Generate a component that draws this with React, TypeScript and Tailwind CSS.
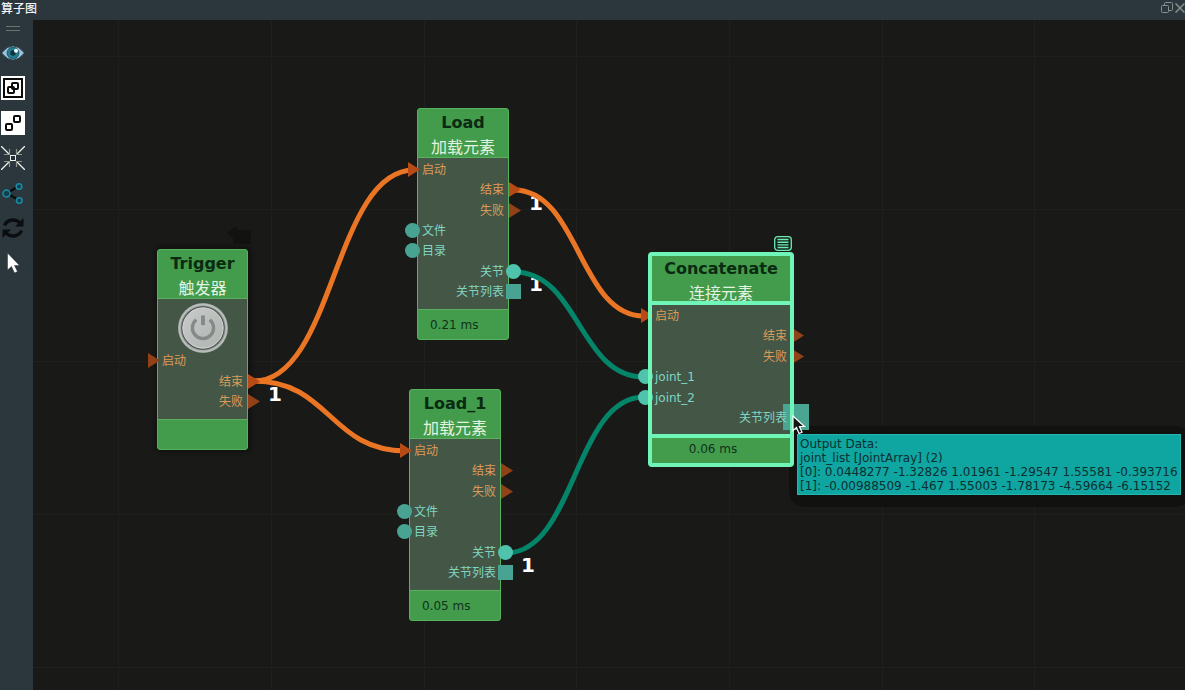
import type { ReactNode } from "react";
import clsx from "clsx";

type PortShape = "trigger" | "circle" | "list";

type Port = {
  label: string;
  side: "in" | "out";
  shape: PortShape;
  linked?: boolean;
  hovered?: boolean;
};

type GraphNode = {
  id: string;
  title: string;
  subtitle: string;
  place: string;
  bodyHeight: string;
  time?: string;
  selected?: boolean;
  power?: boolean;
  ports: Port[];
};

const nodes: GraphNode[] = [
  {
    id: "trigger",
    title: "Trigger",
    subtitle: "触发器",
    place: "left-[124px] top-[229px] w-[91px]",
    bodyHeight: "h-[122px]",
    power: true,
    ports: [
      { label: "启动", side: "in", shape: "trigger" },
      { label: "结束", side: "out", shape: "trigger", linked: true },
      { label: "失败", side: "out", shape: "trigger" },
    ],
  },
  {
    id: "load",
    title: "Load",
    subtitle: "加载元素",
    place: "left-[384px] top-[88px] w-[92px]",
    bodyHeight: "h-[153px]",
    time: "0.21 ms",
    ports: [
      { label: "启动", side: "in", shape: "trigger", linked: true },
      { label: "结束", side: "out", shape: "trigger", linked: true },
      { label: "失败", side: "out", shape: "trigger" },
      { label: "文件", side: "in", shape: "circle" },
      { label: "目录", side: "in", shape: "circle" },
      { label: "关节", side: "out", shape: "circle", linked: true },
      { label: "关节列表", side: "out", shape: "list" },
    ],
  },
  {
    id: "load_1",
    title: "Load_1",
    subtitle: "加载元素",
    place: "left-[376px] top-[369px] w-[92px]",
    bodyHeight: "h-[153px]",
    time: "0.05 ms",
    ports: [
      { label: "启动", side: "in", shape: "trigger", linked: true },
      { label: "结束", side: "out", shape: "trigger" },
      { label: "失败", side: "out", shape: "trigger" },
      { label: "文件", side: "in", shape: "circle" },
      { label: "目录", side: "in", shape: "circle" },
      { label: "关节", side: "out", shape: "circle", linked: true },
      { label: "关节列表", side: "out", shape: "list" },
    ],
  },
  {
    id: "concatenate",
    title: "Concatenate",
    subtitle: "连接元素",
    place: "left-[617px] top-[234px] w-[142px]",
    bodyHeight: "h-[133px]",
    time: "0.06 ms",
    selected: true,
    ports: [
      { label: "启动", side: "in", shape: "trigger", linked: true },
      { label: "结束", side: "out", shape: "trigger" },
      { label: "失败", side: "out", shape: "trigger" },
      { label: "joint_1", side: "in", shape: "circle", linked: true },
      { label: "joint_2", side: "in", shape: "circle", linked: true },
      { label: "关节列表", side: "out", shape: "list", hovered: true },
    ],
  },
];

const wires = [
  { d: "M221 361 C301 361 301 150 381 150", color: "#ea7524" },
  { d: "M221 361 C297 361 297 431 373 431", color: "#ea7524" },
  { d: "M481 170 C546 170 546 296 611 296", color: "#ea7524" },
  { d: "M481 252 C546 252 546 357 611 357", color: "#048468" },
  { d: "M473 533 C542 533 542 377 611 377", color: "#048468" },
];

const wireCounts = [
  { id: "trigger", place: "left-[235px] top-[362px]" },
  { id: "load-end", place: "left-[496px] top-[171px]" },
  { id: "load-joint", place: "left-[496px] top-[252px]" },
  { id: "load_1-joint", place: "left-[488px] top-[533px]" },
];

const gridX = [85, 238, 391, 543, 696, 849, 1001];
const gridY = [36, 189, 341, 494, 647];

function PortMark({ port }: { port: Port }) {
  if (port.hovered) {
    return <span className="absolute top-1/2 -right-[18px] size-[26px] -translate-y-1/2 bg-[#4aa593]" />;
  }
  return (
    <svg
      viewBox="0 0 15 15"
      className={clsx("absolute top-[3px] size-[15px]", port.side === "in" ? "-left-[13px]" : "-right-[13px]")}
    >
      {port.shape === "trigger" && (
        <path d="M3 0 L15 7.5 L3 15 Z" fill={port.linked ? "#b84a16" : "#914117"} />
      )}
      {port.shape === "circle" && (
        <circle cx="7.5" cy="7.5" r="7.5" fill={port.linked ? "#4fc3ab" : "#48a392"} />
      )}
      {port.shape === "list" && <rect width="15" height="15" fill="#48a392" />}
    </svg>
  );
}

function PowerButton() {
  return (
    <button type="button" aria-label="Run" className="mx-auto mt-1 -mb-1 size-[50px] shrink-0">
      <svg viewBox="0 0 52 52" className="size-full">
        <defs>
          <linearGradient id="knob" x1="0" y1="0" x2="1" y2="1">
            <stop offset="0" stopColor="#c8cbc9" />
            <stop offset="1" stopColor="#aeb3b0" />
          </linearGradient>
        </defs>
        <circle cx="26" cy="26" r="26" fill="#8f9692" />
        <circle cx="26" cy="26" r="24.500" fill="none" stroke="#b9bdbb" strokeWidth="2" />
        <circle cx="26" cy="26" r="22.500" fill="#454d49" />
        <circle cx="26" cy="26" r="21" fill="url(#knob)" stroke="#d9dcda" strokeWidth="1" />
        <path d="M19 17.500 A11 11 0 1 0 33 17.500" fill="none" stroke="#848a87" strokeWidth="3.500" />
        <path d="M26 13 V23" stroke="#848a87" strokeWidth="4" />
      </svg>
    </button>
  );
}

function NodeCard({ node }: { node: GraphNode }) {
  return (
    <article className={clsx("absolute", node.place)}>
      <div
        className={clsx(
          "flex flex-col rounded-[3px] border border-[#55b35c] bg-[#439b4c]",
          node.power && "shadow-[1px_0_4px_2px_#10100f]"
        )}
      >
        <header className="flex h-12 flex-col items-center pt-1 whitespace-nowrap">
          <h2 className="h-5 text-base leading-5 font-bold text-[#0b2a12]">{node.title}</h2>
          <p className="mt-1 text-base leading-[22px] text-[#e2f3e0]">{node.subtitle}</p>
        </header>
        <div className={clsx("relative flex flex-col border-y border-[#5cae60] bg-[#445747]", node.bodyHeight)}>
          {node.power && <PowerButton />}
          <ul className="flex flex-1 flex-col justify-between pt-px pb-2">
            {node.ports.map((port) => (
              <li
                key={port.label}
                className={clsx(
                  "relative flex h-5 px-1 text-xs leading-[22px] whitespace-nowrap",
                  port.side === "out" && "justify-end",
                  port.shape === "trigger" ? "text-[#dd9a56]" : "text-[#7fd6c2]"
                )}
              >
                <PortMark port={port} />
                <span className="relative">{port.label}</span>
              </li>
            ))}
          </ul>
          {node.selected && <div className="absolute -inset-x-px -inset-y-[3px] border-y-4 border-[#70f5b8]" />}
        </div>
        <footer
          className={clsx(
            "flex text-xs text-[#10321a]",
            node.selected ? "h-7 items-center justify-center pr-4 pb-0.5" : "h-[29px] items-center pl-3"
          )}
        >
          {node.time}
        </footer>
      </div>
      {node.selected && (
        <div className="absolute -inset-0.5 rounded-[4px] border-4 border-[#70f5b8]" />
      )}
    </article>
  );
}

function ToolButton({ label, children }: { label: string; children: ReactNode }) {
  return (
    <button type="button" aria-label={label} className="size-6">
      <svg viewBox="0 0 24 24" fill="none" className="size-full">
        {children}
      </svg>
    </button>
  );
}

function Toolbar() {
  return (
    <aside className="flex w-[33px] shrink-0 flex-col items-start gap-[11px] pl-px">
      <div className="mt-1.5 ml-[5px] -mb-[1px] flex h-[5px] w-[14px] flex-col justify-between">
        <span className="h-px bg-[#69746f]" />
        <span className="h-px bg-[#69746f]" />
      </div>
      <ToolButton label="显示">
        <path d="M0.500 12 Q12 -2.500 23.500 12 Q12 26.500 0.500 12 Z" fill="#9cc4dc" stroke="#11232b" strokeWidth="0.800" />
        <circle cx="12" cy="12" r="6" fill="#237d8e" stroke="#15424e" strokeWidth="0.700" />
        <circle cx="12" cy="12" r="2.700" fill="#0d3640" />
        <circle cx="15" cy="9.800" r="2" fill="#f3fbfd" />
      </ToolButton>
      <ToolButton label="编组">
        <rect width="24" height="24" fill="#fff" />
        <rect x="3" y="3" width="18" height="18" stroke="#0a0a0a" strokeWidth="2" />
        <rect x="7" y="11" width="6" height="6" rx="1" stroke="#0a0a0a" strokeWidth="2" />
        <rect x="11" y="7" width="6" height="6" rx="1" stroke="#0a0a0a" strokeWidth="2" />
      </ToolButton>
      <ToolButton label="取消编组">
        <rect width="24" height="24" fill="#fff" />
        <rect x="5" y="13" width="6" height="6" rx="1" stroke="#0a0a0a" strokeWidth="2" />
        <rect x="13" y="5" width="6" height="6" rx="1" stroke="#0a0a0a" strokeWidth="2" />
      </ToolButton>
      <ToolButton label="居中">
        <path d="M0 0 L8 8 M24 0 L16 8 M0 24 L8 16 M24 24 L16 16" stroke="#eef0ec" strokeWidth="1.300" />
        <path d="M8.500 3 V8.500 H3 M15.500 3 V8.500 H21 M8.500 21 V15.500 H3 M15.500 21 V15.500 H21" stroke="#8d958d" strokeWidth="1.200" />
        <rect x="9.500" y="9.500" width="5" height="5" fill="#263137" stroke="#eef0ec" />
      </ToolButton>
      <ToolButton label="布局">
        <path d="M8 11 L16 6 M8 13.500 L16 18" stroke="#080d0f" strokeWidth="2.200" />
        <circle cx="5.500" cy="12.500" r="3.500" fill="#123f4b" stroke="#168ba4" strokeWidth="1.600" />
        <circle cx="18" cy="5.500" r="2.800" fill="#123f4b" stroke="#168ba4" strokeWidth="1.600" />
        <circle cx="18.300" cy="19.500" r="2.800" fill="#123f4b" stroke="#168ba4" strokeWidth="1.600" />
      </ToolButton>
      <ToolButton label="刷新">
        <path d="M3.500 9.500 A9 8 0 0 1 18.500 6.500 M20.500 14.500 A9 8 0 0 1 5.500 17.500" stroke="#0b0e10" strokeWidth="3.400" />
        <path d="M22.500 2 V10.500 H14 Z M1.500 22 V13.500 H10 Z" fill="#0b0e10" />
      </ToolButton>
      <ToolButton label="选择">
        <path d="M6.500 2 V19 L10.500 15.500 L13.500 22 L16.500 20.500 L13.500 14.500 H18.500 Z" fill="#fff" stroke="#2a3033" strokeWidth="0.500" />
      </ToolButton>
    </aside>
  );
}

function OutputTooltip() {
  return (
    <div
      role="tooltip"
      className="absolute top-[414px] left-[764px] border border-[#25b5b0] bg-[#0fa5a1] px-0.5 pt-0.5 pb-px text-xs leading-[14px] whitespace-nowrap text-[#0c2f2f]"
    >
      <p>Output Data:</p>
      <p>joint_list [JointArray] (2)</p>
      <p>[0]: 0.0448277 -1.32826 1.01961 -1.29547 1.55581 -0.393716</p>
      <p>[1]: -0.00988509 -1.467 1.55003 -1.78173 -4.59664 -6.15152</p>
    </div>
  );
}

export default function App() {
  return (
    <div className="flex h-screen w-full flex-col overflow-hidden bg-[#2c373d] font-['DejaVu_Sans','Noto_Sans_CJK_SC',sans-serif]">
      <div className="flex h-5 shrink-0 items-center justify-between pl-px">
        <h1 className="pb-[3px] text-xs leading-4 font-medium text-[#f2f4f4]">算子图</h1>
        <div className="flex items-center gap-0.5 pb-1">
          <button type="button" aria-label="浮动" className="size-3">
            <svg viewBox="0 0 12 12" fill="none" stroke="#86908f" className="size-full">
              <rect x="3.500" y="0.500" width="8" height="8" rx="1" />
              <rect x="0.500" y="3.500" width="7" height="7" rx="1" fill="#2c373d" />
            </svg>
          </button>
          <button type="button" aria-label="关闭" className="size-[10px]">
            <svg viewBox="0 0 10 10" fill="none" stroke="#86908f" strokeWidth="1.500" className="size-full">
              <path d="M0.500 0.500 L9.500 9.500 M9.500 0.500 L0.500 9.500" />
            </svg>
          </button>
        </div>
      </div>

      <div className="flex min-h-0 flex-1">
        <Toolbar />

        <main className="relative min-w-0 flex-1 overflow-hidden bg-[#191917]">
          <svg className="absolute inset-0 size-full" stroke="#1f1f1d">
            {gridX.map((x) => (
              <line key={x} x1={x + 0.5} x2={x + 0.5} y1="0" y2="100%" />
            ))}
            {gridY.map((y) => (
              <line key={y} x1="0" x2="100%" y1={y + 0.5} y2={y + 0.5} />
            ))}
          </svg>

          {wireCounts.map((count) => (
            <span key={count.id} className={clsx("absolute text-xl leading-6 font-bold text-white", count.place)}>
              1
            </span>
          ))}

          <svg className="absolute inset-0 size-full" fill="none">
            {wires.map((wire) => (
              <path key={wire.d} d={wire.d} stroke={wire.color} strokeWidth="5" />
            ))}
            {/* dimmed menu mark over the trigger node */}
            <path d="M194 213 L204 206 V210 H218 V224 H200 V218 Z" fill="#121210" />
            {/* tooltip shade */}
            <rect x="756" y="406" width="402" height="81" rx="16" fill="#11110f" />
          </svg>

          {nodes.map((node) => (
            <NodeCard key={node.id} node={node} />
          ))}

          <button type="button" aria-label="节点菜单" className="absolute top-[216px] left-[741px] h-[15px] w-[18px]">
            <svg viewBox="0 0 18 15" fill="none" stroke="#70e8b4" className="size-full">
              <rect x="0.700" y="0.700" width="16.600" height="13.600" rx="3" strokeWidth="1.300" fill="#10251c" />
              <path d="M3.500 3.500 H14.500 M3.500 6.200 H14.500 M3.500 8.900 H14.500 M3.500 11.500 H14.500" strokeWidth="1.400" />
            </svg>
          </button>

          <OutputTooltip />

          {/* mouse pointer */}
          <svg viewBox="0 0 14 20" className="absolute top-[395px] left-[759px] h-5 w-[14px]">
            <path
              d="M1 1 V15.500 L4.500 12.500 L7 18.500 L10 17.200 L7.500 11.500 H12.500 Z"
              fill="#151515"
              stroke="#fff"
              strokeWidth="1.200"
            />
          </svg>
        </main>
      </div>
    </div>
  );
}
